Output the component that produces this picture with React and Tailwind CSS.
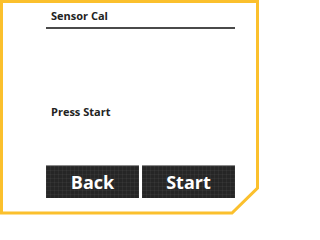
import React from "react";

const gridBg =
  "bg-[#262626] bg-[linear-gradient(rgba(255,255,255,0.04)_1px,transparent_1px),linear-gradient(90deg,rgba(255,255,255,0.04)_1px,transparent_1px)] bg-[size:4px_4px]";

const PanelButton = ({ label }) => (
  <button
    className={`flex-1 h-[33px] flex items-center justify-center border-t border-[#8a8a8a] ${gridBg} text-white text-[18px] font-bold leading-none`}
  >
    {label}
  </button>
);

const App = () => {
  return (
    <div
      className="relative w-[259px] h-[215px] bg-white overflow-hidden"
      style={{ fontFamily: '"Open Sans", "Noto Sans", sans-serif' }}
    >
      {/* yellow frame with chamfered corner */}
      <svg className="absolute inset-0 pointer-events-none" width="259" height="215">
        <polyline
          points="1.5,0 1.5,213 232,213 257.5,188 257.5,0"
          fill="none"
          stroke="#fbc02d"
          strokeWidth="3"
        />
        <line x1="0" y1="1.5" x2="259" y2="1.5" stroke="#fbc02d" strokeWidth="3" />
      </svg>

      <div className="flex flex-col h-full pl-[46px] pr-[24px] pt-[9px]">
        <div className="border-b-2 border-[#4a4a4a] pl-[5px] pb-[4px] text-[11px] font-bold text-[#222] leading-[14px]">
          Sensor Cal
        </div>

        <div className="pl-[5px] mt-[76px] text-[11px] font-bold text-[#222] leading-[14px]">
          Press Start
        </div>

        <div className="flex gap-[3px] mt-[46px]">
          <PanelButton label="Back" />
          <PanelButton label="Start" />
        </div>
      </div>
    </div>
  );
};

export default App;
